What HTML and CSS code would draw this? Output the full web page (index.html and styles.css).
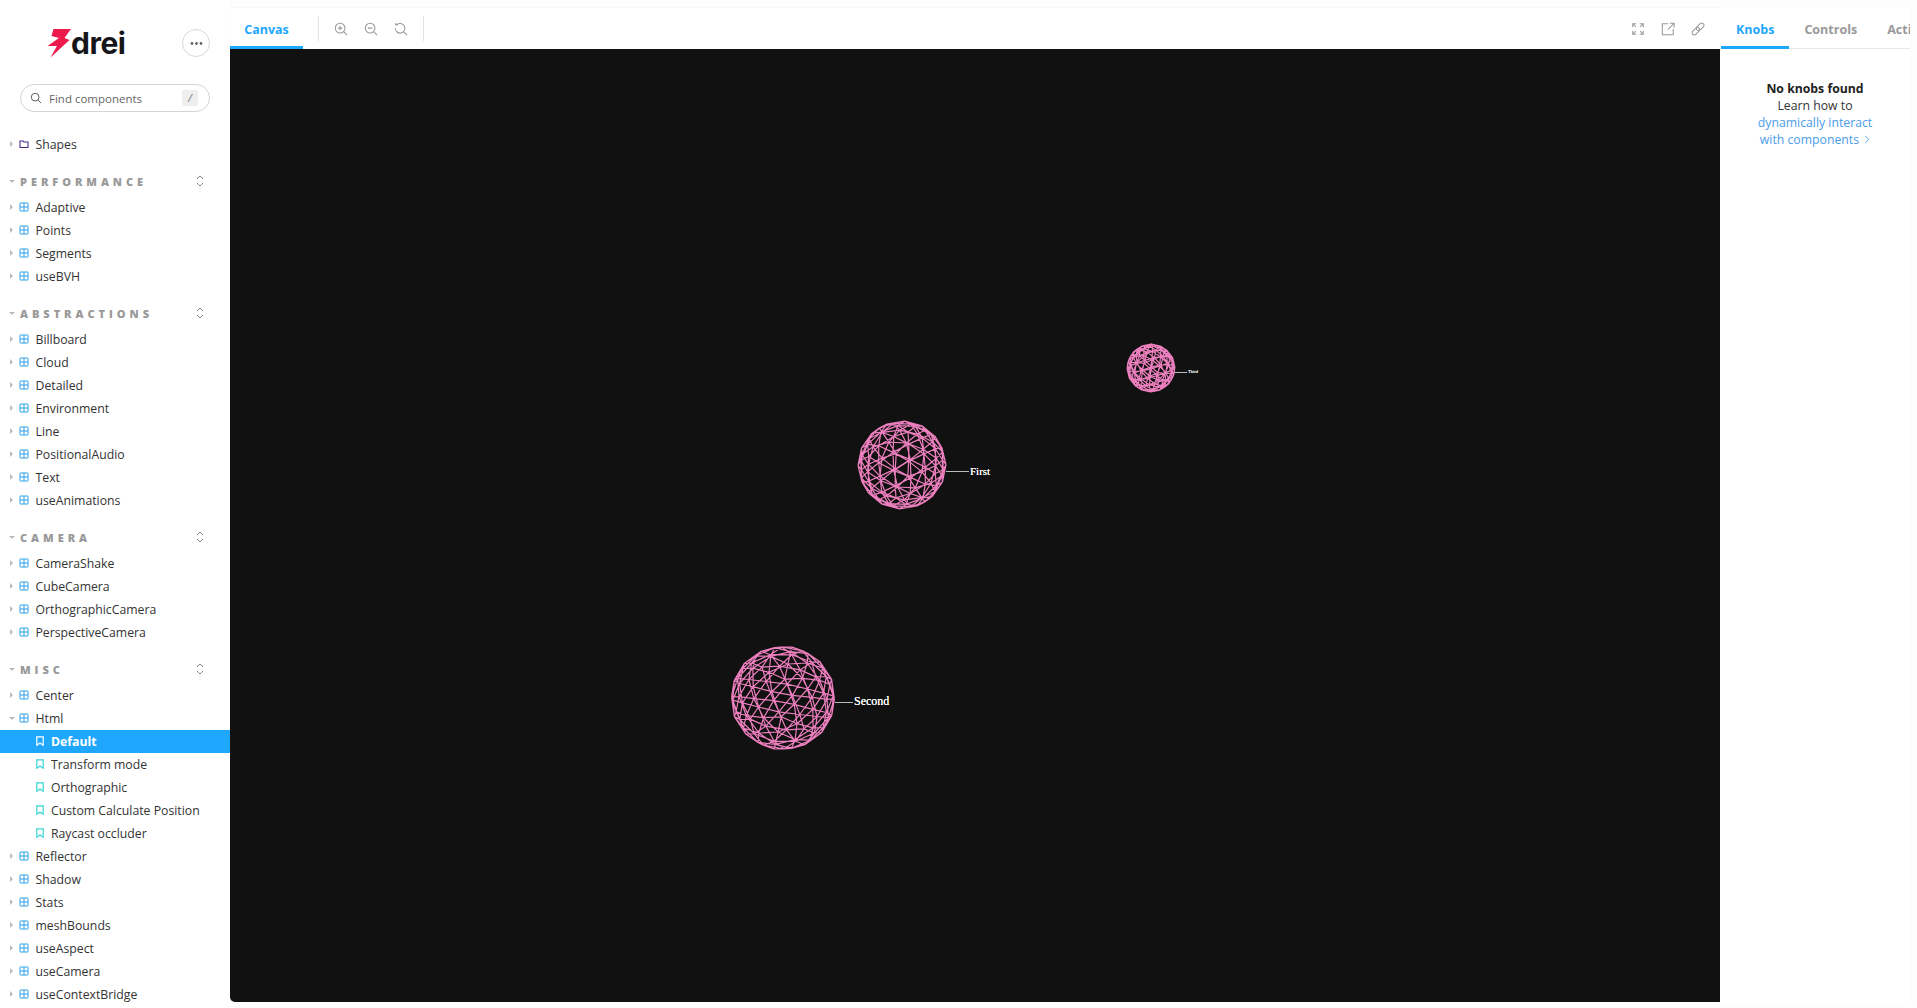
FILE: index.html
```html
<!DOCTYPE html>
<html lang="en">
<head>
    <meta charset="UTF-8">
    <title>Html - Default</title>
    <link rel="stylesheet" href="styles.css">
    <script src="sphere.js" defer></script>
</head>
<body>
    <svg class="defs" width="0" height="0">
        <symbol id="i-comp" viewBox="0 0 10 10"><path d="M1.5 1h7a.5.5 0 0 1 .5.5v7a.5.5 0 0 1-.5.5h-7a.5.5 0 0 1-.5-.5v-7a.5.5 0 0 1 .5-.5zM1 5h8M5 1v8" fill="none" stroke="currentColor" stroke-width="1"/></symbol>
        <symbol id="i-folder" viewBox="0 0 10 10"><path d="M1 2h3l1 1h4v5.500H1z" fill="none" stroke="currentColor" stroke-width="1.100"/></symbol>
        <symbol id="i-mark" viewBox="0 0 10 10"><path d="M1.800 .8h6.400v8.400L5 6.900 1.800 9.200z" fill="none" stroke="currentColor" stroke-width="1.200"/></symbol>
    </svg>

    <div class="app">
        <aside class="sidebar">
            <div class="brand">
                <div class="logo">
                    <svg class="bolt" viewBox="0 0 24 30"><polygon points="6.500,1 24,1 17.500,10 22.500,12 3.500,29.500 10,18 0.500,18 12,10 4.500,8"/></svg>
                    <span class="logo-text">drei</span>
                </div>
                <button class="more"><svg width="13" height="3" viewBox="0 0 13 3"><circle cx="2" cy="1.500" r="1.400"/><circle cx="6.500" cy="1.500" r="1.400"/><circle cx="11" cy="1.500" r="1.400"/></svg></button>
            </div>

            <div class="search">
                <svg class="search-icon" viewBox="0 0 14 14"><circle cx="6" cy="6" r="4.500"/><path d="M9.300 9.300L13 13"/></svg>
                <span class="search-text">Find components</span>
                <span class="kbd">/</span>
            </div>

            <div class="tree">
                <div class="row"><i class="arrow"></i><svg class="icon folder"><use href="#i-folder"/></svg>Shapes</div>

                <div class="section"><i class="caret"></i><span class="section-name">PERFORMANCE</span><svg class="unfold" viewBox="0 0 10 14"><path d="M2 5l3-3 3 3M2 9l3 3 3-3"/></svg></div>
                <div class="row"><i class="arrow"></i><svg class="icon"><use href="#i-comp"/></svg>Adaptive</div>
                <div class="row"><i class="arrow"></i><svg class="icon"><use href="#i-comp"/></svg>Points</div>
                <div class="row"><i class="arrow"></i><svg class="icon"><use href="#i-comp"/></svg>Segments</div>
                <div class="row"><i class="arrow"></i><svg class="icon"><use href="#i-comp"/></svg>useBVH</div>

                <div class="section"><i class="caret"></i><span class="section-name">ABSTRACTIONS</span><svg class="unfold" viewBox="0 0 10 14"><path d="M2 5l3-3 3 3M2 9l3 3 3-3"/></svg></div>
                <div class="row"><i class="arrow"></i><svg class="icon"><use href="#i-comp"/></svg>Billboard</div>
                <div class="row"><i class="arrow"></i><svg class="icon"><use href="#i-comp"/></svg>Cloud</div>
                <div class="row"><i class="arrow"></i><svg class="icon"><use href="#i-comp"/></svg>Detailed</div>
                <div class="row"><i class="arrow"></i><svg class="icon"><use href="#i-comp"/></svg>Environment</div>
                <div class="row"><i class="arrow"></i><svg class="icon"><use href="#i-comp"/></svg>Line</div>
                <div class="row"><i class="arrow"></i><svg class="icon"><use href="#i-comp"/></svg>PositionalAudio</div>
                <div class="row"><i class="arrow"></i><svg class="icon"><use href="#i-comp"/></svg>Text</div>
                <div class="row"><i class="arrow"></i><svg class="icon"><use href="#i-comp"/></svg>useAnimations</div>

                <div class="section"><i class="caret"></i><span class="section-name">CAMERA</span><svg class="unfold" viewBox="0 0 10 14"><path d="M2 5l3-3 3 3M2 9l3 3 3-3"/></svg></div>
                <div class="row"><i class="arrow"></i><svg class="icon"><use href="#i-comp"/></svg>CameraShake</div>
                <div class="row"><i class="arrow"></i><svg class="icon"><use href="#i-comp"/></svg>CubeCamera</div>
                <div class="row"><i class="arrow"></i><svg class="icon"><use href="#i-comp"/></svg>OrthographicCamera</div>
                <div class="row"><i class="arrow"></i><svg class="icon"><use href="#i-comp"/></svg>PerspectiveCamera</div>

                <div class="section"><i class="caret"></i><span class="section-name">MISC</span><svg class="unfold" viewBox="0 0 10 14"><path d="M2 5l3-3 3 3M2 9l3 3 3-3"/></svg></div>
                <div class="row"><i class="arrow"></i><svg class="icon"><use href="#i-comp"/></svg>Center</div>
                <div class="row"><i class="caret"></i><svg class="icon"><use href="#i-comp"/></svg>Html</div>
                <div class="row story active"><svg class="icon mark"><use href="#i-mark"/></svg>Default</div>
                <div class="row story"><svg class="icon mark"><use href="#i-mark"/></svg>Transform mode</div>
                <div class="row story"><svg class="icon mark"><use href="#i-mark"/></svg>Orthographic</div>
                <div class="row story"><svg class="icon mark"><use href="#i-mark"/></svg>Custom Calculate Position</div>
                <div class="row story"><svg class="icon mark"><use href="#i-mark"/></svg>Raycast occluder</div>
                <div class="row"><i class="arrow"></i><svg class="icon"><use href="#i-comp"/></svg>Reflector</div>
                <div class="row"><i class="arrow"></i><svg class="icon"><use href="#i-comp"/></svg>Shadow</div>
                <div class="row"><i class="arrow"></i><svg class="icon"><use href="#i-comp"/></svg>Stats</div>
                <div class="row"><i class="arrow"></i><svg class="icon"><use href="#i-comp"/></svg>meshBounds</div>
                <div class="row"><i class="arrow"></i><svg class="icon"><use href="#i-comp"/></svg>useAspect</div>
                <div class="row"><i class="arrow"></i><svg class="icon"><use href="#i-comp"/></svg>useCamera</div>
                <div class="row"><i class="arrow"></i><svg class="icon"><use href="#i-comp"/></svg>useContextBridge</div>
            </div>
        </aside>

        <main class="preview">
            <div class="toolbar">
                <div class="tab tab-canvas">Canvas</div>
                <span class="divider"></span>
                <div class="tools">
                    <svg class="tool" viewBox="0 0 16 16"><circle cx="7" cy="7" r="5.500"/><path d="M11 11l4 4M7 4.500v5M4.500 7h5"/></svg>
                    <svg class="tool" viewBox="0 0 16 16"><circle cx="7" cy="7" r="5.500"/><path d="M11 11l4 4M4.500 7h5"/></svg>
                    <svg class="tool" viewBox="0 0 16 16"><path d="M3.200 3.200A5.500 5.500 0 1 1 1.500 7M11 11l4 4M1.500 1.500l1.700 1.700h-2"/></svg>
                </div>
                <span class="divider"></span>
                <div class="tools tools-right">
                    <svg class="tool" viewBox="0 0 16 16"><path d="M2 6V2h4M10 2h4v4M14 10v4h-4M6 14H2v-4M2.500 2.500l3 3M13.500 2.500l-3 3M13.500 13.500l-3-3M2.500 13.500l3-3"/></svg>
                    <svg class="tool" viewBox="0 0 16 16"><path d="M8 2H1.500v12.500H14V8M8 8.500L14.500 2M10 1.500h5v5"/></svg>
                    <svg class="tool" viewBox="0 0 16 16"><g transform="rotate(-45 8 8)"><rect x="-0.500" y="5.500" width="10" height="5" rx="2.500"/><rect x="6.500" y="5.500" width="10" height="5" rx="2.500"/></g></svg>
                </div>
            </div>
            <div class="stage">
                <div class="node node-first">
                    <svg class="sphere" data-r="44" data-rx="0.3" data-ry="0.15" data-rz="0.05"></svg>
                    <span class="tag">First</span>
                </div>
                <div class="node node-second">
                    <svg class="sphere" data-r="52" data-rx="0.5" data-ry="0.8" data-rz="0.9"></svg>
                    <span class="tag">Second</span>
                </div>
                <div class="node node-third">
                    <svg class="sphere" data-r="24" data-rx="0.2" data-ry="0.7" data-rz="0.3"></svg>
                    <span class="tag">Third</span>
                </div>
            </div>
        </main>

        <section class="addons">
            <div class="addon-tabs">
                <div class="tab tab-knobs">Knobs</div>
                <div class="tab tab-grey">Controls</div>
                <div class="tab tab-grey">Actions</div>
            </div>
            <div class="empty">
                <strong>No knobs found</strong><br>
                Learn how to<br>
                <a class="link">dynamically interact<br>with components <svg class="chev" viewBox="0 0 6 10"><path d="M1 1l4 4-4 4"/></svg></a>
            </div>
        </section>
    </div>
</body>
</html>
```

FILE: styles.css
```css
* {
    box-sizing: border-box;
}

html, body {
    margin: 0;
    height: 100%;
    overflow: hidden;
}

body {
    background-color: #fdfdfd;
    font-family: "Open Sans", "Noto Sans", sans-serif;
    font-size: 12.25px;
    color: #333;
}

.defs {
    position: absolute;
}

.app {
    display: flex;
    height: 1008px;
}

/* sidebar */
.sidebar {
    width: 230px;
    flex: none;
    height: 1008px;
    overflow: hidden;
    background-color: #fff;
}

.brand {
    display: flex;
    align-items: center;
    justify-content: space-between;
    height: 46px;
    margin-top: 20px;
    padding: 0 20px 0 47px;
}

.logo {
    display: flex;
    align-items: center;
}

.bolt {
    width: 24px;
    height: 30px;
    fill: #ec1b4b;
}

.logo-text {
    font-family: Inter, "Liberation Sans", sans-serif;
    font-size: 30px;
    font-weight: 700;
    line-height: 30px;
    letter-spacing: -0.5px;
    color: #16161a;
}

.more {
    width: 28px;
    height: 28px;
    padding: 0;
    display: flex;
    align-items: center;
    justify-content: center;
    background-color: #fff;
    border: 1px solid #d8d8d8;
    border-radius: 50%;
}

.more svg {
    fill: #666;
}

.search {
    display: flex;
    align-items: center;
    height: 28px;
    margin: 18px 20px 0 20px;
    padding: 0 11px 0 9px;
    border: 1px solid #d4d4d4;
    border-radius: 14px;
}

.search-icon {
    width: 12px;
    height: 12px;
    fill: none;
    stroke: #555;
    stroke-width: 1.100;
}

.search-text {
    flex: 1;
    margin-left: 7px;
    font-size: 11.5px;
    color: #666;
}

.kbd {
    width: 16px;
    height: 16px;
    line-height: 16px;
    text-align: center;
    background-color: #eee;
    border-radius: 2px;
    font-size: 11px;
    font-style: italic;
    color: #777;
}

.tree {
    margin-top: 20.5px;
}

.row {
    display: flex;
    align-items: center;
    height: 23px;
    padding-left: 10px;
    white-space: nowrap;
    color: #333;
}

.arrow {
    flex: none;
    width: 0;
    height: 0;
    margin-right: 5px;
    border-left: 3px solid #bbb;
    border-top: 3px solid transparent;
    border-bottom: 3px solid transparent;
}

.row .caret {
    margin-left: -1px;
    margin-right: 3px;
}

.caret {
    flex: none;
    width: 0;
    height: 0;
    border-top: 3px solid #bbb;
    border-left: 3.500px solid transparent;
    border-right: 3.500px solid transparent;
}

.icon {
    flex: none;
    width: 10px;
    height: 10px;
    margin-right: 6.500px;
    margin-left: 1px;
    color: #2a9fe8;
}

.folder {
    color: #4a2c8f;
}

.story {
    padding-left: 35px;
}

.story .icon {
    margin-left: 0;
    margin-right: 6px;
}

.mark {
    color: #37d5d3;
}

.active {
    background-color: #1ea7fd;
    color: #fff;
    font-weight: 700;
}

.active .mark {
    color: #fff;
}

.section {
    display: flex;
    align-items: center;
    height: 19px;
    margin-top: 16px;
    margin-bottom: 5px;
    padding-left: 9px;
    padding-right: 25px;
}

.section-name {
    flex: 1;
    margin-left: 5px;
    font-size: 11px;
    font-weight: 800;
    letter-spacing: 0.36em;
    color: #999;
}

.unfold {
    width: 10px;
    height: 14px;
    fill: none;
    stroke: #888;
    stroke-width: 1;
}

/* canvas */
.preview {
    width: 1490px;
    flex: none;
    height: 994px;
    margin-top: 8px;
    display: flex;
    flex-direction: column;
}

.toolbar {
    display: flex;
    align-items: center;
    height: 41px;
    flex: none;
    background-color: #fff;
    box-shadow: 0 -1px 2px rgba(0,0,0,0.03);
}

.tab {
    font-size: 12.5px;
    font-weight: 700;
    display: flex;
    align-items: center;
    height: 41px;
    padding-top: 4px;
    border-bottom: 3px solid transparent;
}

.tab-canvas {
    width: 73px;
    justify-content: center;
    color: #1ea7fd;
    border-bottom-color: #1ea7fd;
}

.divider {
    width: 1px;
    height: 25px;
    background-color: #e4e4e4;
}

.tab-canvas + .divider {
    margin-left: 15px;
}

.tools {
    display: flex;
    align-items: center;
    gap: 16px;
    padding: 1px 15px 0 15px;
}

.tools-right {
    margin-left: auto;
    order: 5;
}

.tool {
    width: 14px;
    height: 14px;
    fill: none;
    stroke: #999;
    stroke-width: 1.200;
}

.stage {
    position: relative;
    flex: 1;
    background-color: #111;
    border-radius: 0 0 0 5px;
    overflow: hidden;
}

/* spheres sit on a free canvas */
.node {
    position: absolute;
    display: flex;
    align-items: center;
}

.sphere {
    display: block;
    overflow: visible;
    fill: none;
    stroke: #ec7fbe;
    stroke-width: 1.200;
}

.tag {
    position: absolute;
    font-family: "Liberation Serif", serif;
    color: #fff;
    white-space: nowrap;
    text-shadow: 0 0 0.5px #fff;
}

.tag::before {
    content: "";
    position: absolute;
    top: 50%;
    height: 1px;
    background-color: #bbb;
}

.node-first {
    left: 627px;
    top: 371px;
}

.node-first .tag {
    left: 113px;
    top: 45px;
    font-size: 11px;
}

.node-first .tag::before {
    left: -24px;
    width: 23px;
}

.node-second {
    left: 500px;
    top: 596px;
}

.node-second .tag {
    left: 124px;
    top: 49px;
    font-size: 12px;
}

.node-second .tag::before {
    left: -19px;
    width: 18px;
}

.node-third {
    left: 896px;
    top: 294px;
}

.node-third .tag {
    left: 62px;
    top: 26px;
    font-size: 4.500px;
}

.node-third .tag::before {
    left: -13px;
    width: 12px;
}

/* right panel */
.addons {
    width: 190px;
    flex: none;
    height: 994px;
    margin-top: 8px;
    background-color: #fff;
    overflow: hidden;
}

.addon-tabs {
    display: flex;
    height: 41px;
    border-bottom: 1px solid #e8e8e8;
    white-space: nowrap;
}

.addon-tabs .tab {
    height: 41px;
    padding: 4px 15px 0 15px;
}

.tab-knobs {
    color: #1ea7fd;
    margin-left: 1px;
    border-bottom-color: #1ea7fd !important;
}

.tab-grey {
    color: #999;
}

.empty {
    padding-top: 31px;
    text-align: center;
    font-size: 12.25px;
    line-height: 17px;
    color: #333;
}

.empty strong {
    color: #222;
}

.link {
    color: #4a9de8;
}

.chev {
    width: 6px;
    height: 9px;
    margin-left: 2px;
    fill: none;
    stroke: #4a9de8;
    stroke-width: 1;
}
```

FILE: sphere.js
```js
// wireframe icosphere, same idea as a three.js IcosahedronGeometry with detail 2
var t = (1 + Math.sqrt(5)) / 2;

var verts = [
    [-1, t, 0], [1, t, 0], [-1, -t, 0], [1, -t, 0],
    [0, -1, t], [0, 1, t], [0, -1, -t], [0, 1, -t],
    [t, 0, -1], [t, 0, 1], [-t, 0, -1], [-t, 0, 1]
];

var faces = [
    [0, 11, 5], [0, 5, 1], [0, 1, 7], [0, 7, 10], [0, 10, 11],
    [1, 5, 9], [5, 11, 4], [11, 10, 2], [10, 7, 6], [7, 1, 8],
    [3, 9, 4], [3, 4, 2], [3, 2, 6], [3, 6, 8], [3, 8, 9],
    [4, 9, 5], [2, 4, 11], [6, 2, 10], [8, 6, 7], [9, 8, 1]
];

function lerp(a, b, k) {
    return [a[0] + (b[0] - a[0]) * k, a[1] + (b[1] - a[1]) * k, a[2] + (b[2] - a[2]) * k];
}

function norm(p) {
    var l = Math.sqrt(p[0] * p[0] + p[1] * p[1] + p[2] * p[2]);
    return [p[0] / l, p[1] / l, p[2] / l];
}

function rotate(p, rx, ry, rz) {
    var x = p[0], y = p[1], z = p[2], a, b;
    a = y * Math.cos(rx) - z * Math.sin(rx); b = y * Math.sin(rx) + z * Math.cos(rx); y = a; z = b;
    a = x * Math.cos(ry) + z * Math.sin(ry); b = -x * Math.sin(ry) + z * Math.cos(ry); x = a; z = b;
    a = x * Math.cos(rz) - y * Math.sin(rz); b = x * Math.sin(rz) + y * Math.cos(rz); x = a; y = b;
    return [x, y, z];
}

// every face split in 3 per edge gives the 180 triangles
function buildEdges() {
    var n = 3, edges = [];
    faces.forEach(function (f) {
        var a = verts[f[0]], b = verts[f[1]], c = verts[f[2]];
        function pt(i, j) {
            var left = lerp(a, c, i / n), right = lerp(b, c, i / n);
            return norm(lerp(left, right, n - i === 0 ? 0 : j / (n - i)));
        }
        for (var i = 0; i < n; i++) {
            for (var j = 0; j < n - i; j++) {
                edges.push([pt(i, j), pt(i, j + 1)]);
                edges.push([pt(i, j), pt(i + 1, j)]);
                edges.push([pt(i, j + 1), pt(i + 1, j)]);
            }
        }
    });
    return edges;
}

var edges = buildEdges();

document.querySelectorAll('.sphere').forEach(function (svg) {
    var r = +svg.dataset.r, rx = +svg.dataset.rx, ry = +svg.dataset.ry, rz = +svg.dataset.rz;
    var size = r * 2 + 2, c = r + 1, d = '';
    svg.setAttribute('width', size);
    svg.setAttribute('height', size);
    edges.forEach(function (e) {
        var p = rotate(e[0], rx, ry, rz), q = rotate(e[1], rx, ry, rz);
        d += 'M' + (c + p[0] * r).toFixed(1) + ' ' + (c + p[1] * r).toFixed(1) +
             'L' + (c + q[0] * r).toFixed(1) + ' ' + (c + q[1] * r).toFixed(1);
    });
    var path = document.createElementNS('http://www.w3.org/2000/svg', 'path');
    path.setAttribute('d', d);
    svg.appendChild(path);
});
```
